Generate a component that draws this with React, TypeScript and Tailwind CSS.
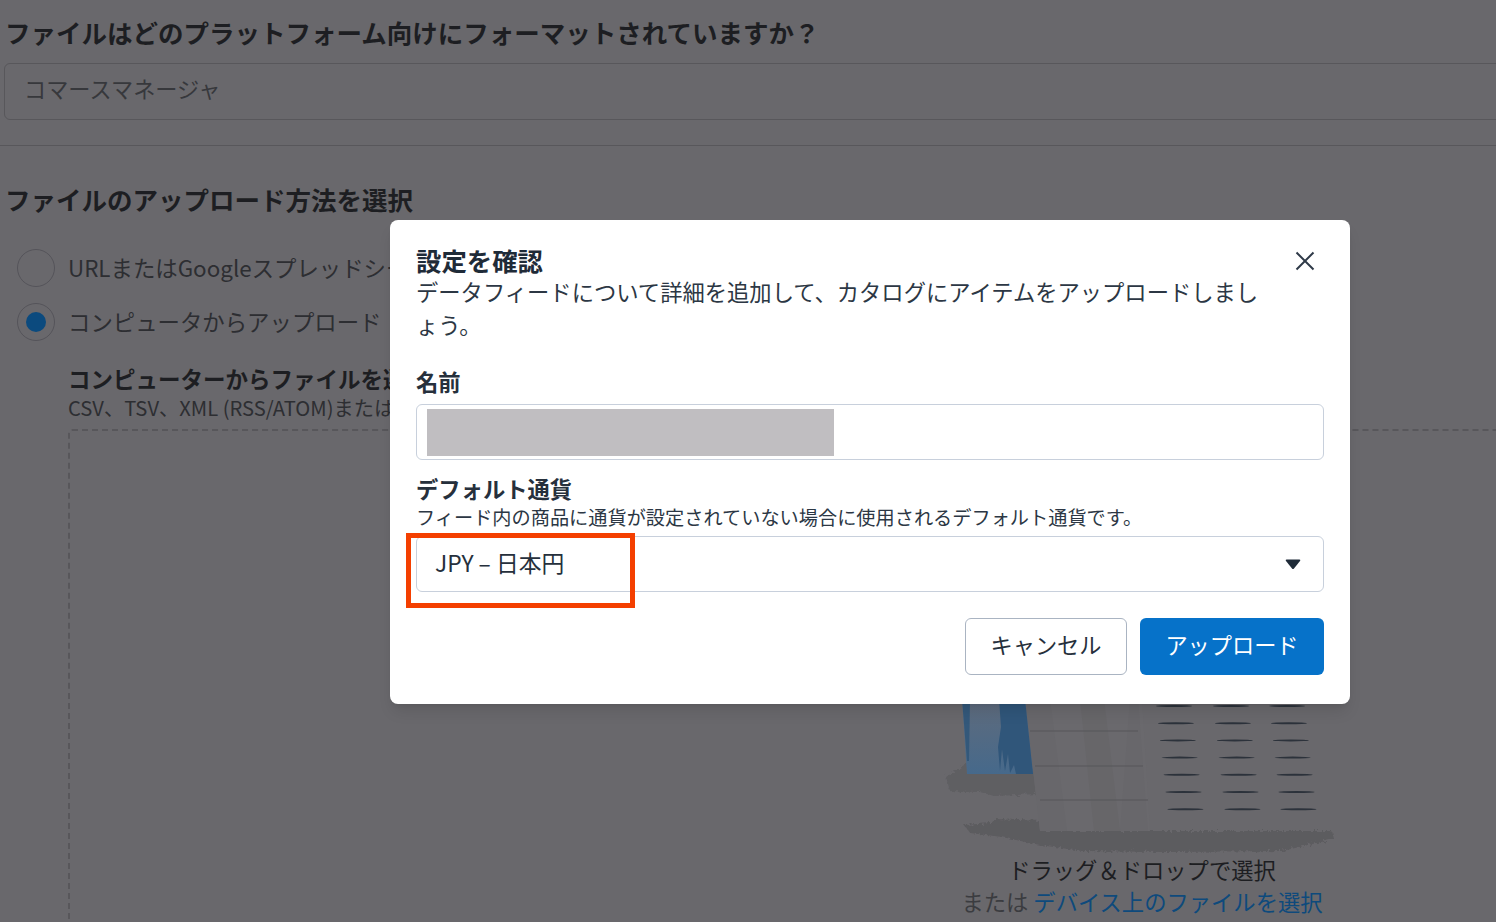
const font = { fontFamily: '"Noto Sans CJK JP", "Liberation Sans", sans-serif' };

function Illustration() {
  const rows = [0, 1, 2, 3, 4, 5, 6];
  const columns = [232, 289, 345];
  return (
    <svg width="400" height="154" viewBox="0 0 400 154" className="block">
      <defs>
        <linearGradient id="shirt" x1="0" y1="0" x2="0" y2="1">
          <stop offset="0" stopColor="#5f6b7c" />
          <stop offset="1" stopColor="#46698b" />
        </linearGradient>
        <filter id="brush" x="-5%" y="-20%" width="110%" height="140%">
          <feTurbulence type="fractalNoise" baseFrequency="0.35" numOctaves="2" seed="4" />
          <feDisplacementMap in="SourceGraphic" scale="7" />
          <feGaussianBlur stdDeviation="0.6" />
        </filter>
      </defs>
      {/* brush shadows */}
      <g filter="url(#brush)">
        <path d="M4 78 L25 64 L92 70 L96 95 L52 97 L38 93 L8 92 Z" fill="#5f5e62" />
        <path d="M22 126 L50 124 L52 120 L100 122 L100 132 L390 132 L392 140 L340 152 L225 153 L140 152 L98 146 L60 138 L28 134 Z" fill="#5c5b5f" />
      </g>
      {/* paper */}
      <path d="M83 0 H200 L208 132 H98 Z" fill="#6a696d" />
      <path d="M83 0 H108 L125 132 H98 Z" fill="#68676b" />
      <path d="M138 0 H162 L178 132 H152 Z" fill="#676669" />
      <path d="M188 0 H196 L206 132 H178 Z" fill="#68676b" />
      {[32, 67, 101].map((y, i) => (
        <line key={y} x1={88 + i * 5} y1={y} x2={196 + i * 5} y2={y} stroke="#57565b" strokeWidth="1.2" />
      ))}
      {/* figure */}
      <path d="M20 0 H83 L91 75 H25 Z" fill="url(#shirt)" />
      <path d="M20 0 H28 L27 62 H25 Z" fill="#33587a" />
      <path d="M57 0 H83 L91 75 H74 L72 66 L68 74 L66 55 L63 72 L60 50 L58 72 L56 48 L59 28 Z" fill="#30567a" />
      {/* form lines */}
      {rows.map((r) =>
        columns.map((x) => (
          <ellipse key={`${r}-${x}`} cx={x + r * 1.9} cy={7 + r * 17.2} rx="18" ry="1" fill="#2c323b" />
        ))
      )}
    </svg>
  );
}

function Background() {
  return (
    <div className="h-[922px] w-[1496px] overflow-hidden bg-[#69686c] text-[#1d1e22]">
      <h2 className="whitespace-nowrap pl-[5px] pt-[14px] text-[25.5px] font-bold leading-9">
        ファイルはどのプラットフォーム向けにフォーマットされていますか？
      </h2>
      <div className="ml-[4px] mt-[13px] flex h-[57px] w-[1540px] items-center rounded-[6px] border border-[#58575b] pb-[6px] pl-[19px] text-[22.2px] text-[#37383c]">
        コマースマネージャ
      </div>
      <div className="mt-[25px] h-px bg-[#58575b]" />
      <h2 className="whitespace-nowrap pl-[5px] pt-[35px] text-[25.5px] font-bold leading-9">
        ファイルのアップロード方法を選択
      </h2>
      <div className="mt-[32px] flex items-center gap-[13px] pl-[17px] text-[22.4px] text-[#2d2e32]">
        <span className="h-[38px] w-[38px] rounded-full border border-[#55545a]" />
        <span className="whitespace-nowrap">URLまたはGoogleスプレッドシート</span>
      </div>
      <div className="mt-[16px] flex items-center gap-[13px] pl-[17px] text-[22.4px] text-[#2d2e32]">
        <span className="flex h-[38px] w-[38px] items-center justify-center rounded-full border border-[#55545a]">
          <span className="h-[20px] w-[20px] rounded-full bg-[#0b4a7e]" />
        </span>
        <span className="whitespace-nowrap">コンピュータからアップロード</span>
      </div>
      <div className="pl-[68px] pt-[21px]">
        <p className="whitespace-nowrap text-[22.5px] font-bold leading-8">コンピューターからファイルを選択</p>
        <p className="mt-[1px] whitespace-nowrap text-[20.2px] leading-[26px] text-[#2d2e32]">CSV、TSV、XML (RSS/ATOM)またはテキスト形式</p>
        <div className="mt-[8px] flex h-[600px] w-[2148px] flex-col items-center rounded-[4px] border-2 border-dashed border-[#58575b] pt-[268px]">
          <Illustration />
          <p className="whitespace-nowrap text-[22.3px] leading-8 text-[#1d1e22]">ドラッグ＆ドロップで選択</p>
          <p className="whitespace-nowrap text-[22.3px] leading-8 text-[#3b3c40]">
            または <span className="text-[#0e4a7c]">デバイス上のファイルを選択</span>
          </p>
        </div>
      </div>
    </div>
  );
}

function Modal() {
  return (
    <div className="absolute left-[390px] top-[220px] h-[484px] w-[960px] rounded-[8px] bg-white px-[26px] pt-[22px] text-[#26303c] shadow-lg">
      <div className="flex items-start justify-between">
        <div className="w-[850px]">
          <h3 className="text-[25.4px] font-bold leading-[36px] text-[#1f2b38]">設定を確認</h3>
          <p className="-mt-[3px] text-[22.3px] leading-[33px] text-[#2c3744]">
            データフィードについて詳細を追加して、カタログにアイテムをアップロードしましょう。
          </p>
        </div>
        <button className="mr-[8px] mt-[8px] text-[#2f3a48]">
          <svg width="22" height="22" viewBox="0 0 22 22" fill="none" stroke="currentColor" strokeWidth="2">
            <path d="M2.5 2.5 L19.5 19.5 M19.5 2.5 L2.5 19.5" />
          </svg>
        </button>
      </div>

      <label className="mt-[24px] block text-[22.3px] font-bold leading-[32px]">名前</label>
      <div className="mt-[7px] h-[56px] rounded-[6px] border border-[#c8d0dc] py-[4px] pl-[10px]">
        <div className="h-[47px] w-[407px] bg-[#c0bec1]" />
      </div>

      <label className="mt-[12px] block text-[22.3px] font-bold leading-[32px]">デフォルト通貨</label>
      <p className="whitespace-nowrap text-[19.2px] leading-[26px] text-[#2c3744]">
        フィード内の商品に通貨が設定されていない場合に使用されるデフォルト通貨です。
      </p>
      <div className="mt-[6px] flex h-[56px] items-center justify-between rounded-[6px] border border-[#c8d0dc] pl-[18px] pr-[22px] text-[22.8px]">
        <span className="pb-[2px]">JPY – 日本円</span>
        <svg width="16" height="11" viewBox="0 0 16 11" fill="#1f2b38">
          <path d="M1.5 0.5 H14.5 Q16 0.5 15 2 L9 9.5 Q8 10.5 7 9.5 L1 2 Q0 0.5 1.5 0.5 Z" />
        </svg>
      </div>

      <div className="mt-[26px] flex justify-end gap-[13px]">
        <button className="h-[57px] w-[162px] rounded-[6px] border border-[#aab4c2] bg-white pb-[4px] text-[22.2px] text-[#26303c]">
          キャンセル
        </button>
        <button className="h-[57px] w-[184px] rounded-[6px] bg-[#0672c9] pb-[4px] text-[22.2px] text-white">
          アップロード
        </button>
      </div>

      {/* annotation from the screenshot */}
      <div className="absolute left-[16px] top-[313px] h-[75px] w-[229px] border-[5px] border-[#f43f00]" />
    </div>
  );
}

export default function App() {
  return (
    <div className="relative h-[922px] w-[1496px] overflow-hidden" style={font}>
      <Background />
      <Modal />
    </div>
  );
}
